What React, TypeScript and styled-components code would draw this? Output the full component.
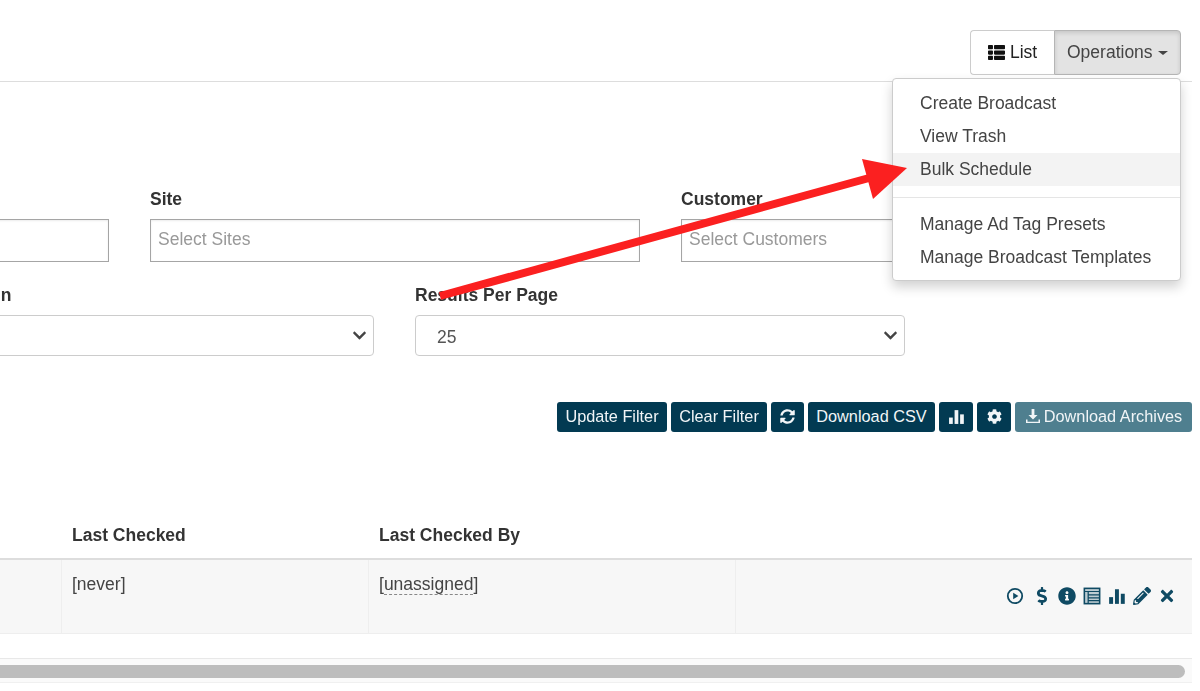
import React from 'react';
import styled, { createGlobalStyle } from 'styled-components';
import { FaThList, FaSyncAlt, FaCog, FaDollarSign, FaInfoCircle, FaPencilAlt, FaTimes, FaChevronDown } from 'react-icons/fa';

const GlobalStyle = createGlobalStyle`
  html, body {
    margin: 0;
    padding: 0;
    background: #fff;
    overflow: hidden;
  }
  body {
    font-family: "Liberation Sans", Arial, sans-serif;
    font-size: 17.5px;
    color: #333;
  }
`;

const Page = styled.div`
  position: relative;
  width: 1200px;
  height: 691px;
  overflow: hidden;
  filter: blur(0.6px);
`;

const Header = styled.header`
  display: flex;
  justify-content: flex-end;
  align-items: flex-start;
  width: 1192px;
  height: 82px;
  box-sizing: border-box;
  padding: 30px 11px 0 0;
  border-bottom: 1px solid #ddd;
`;

const ButtonGroup = styled.div`
  display: flex;
  height: 45px;
`;

const ListButton = styled.button`
  display: flex;
  align-items: center;
  gap: 5px;
  width: 84px;
  box-sizing: border-box;
  padding: 0 0 0 17px;
  font: 17.5px "Liberation Sans", Arial, sans-serif;
  color: #222;
  background: #fff;
  border: 1px solid #ccc;
  border-right: 0;
  border-radius: 4px 0 0 4px;
`;

const OpsButton = styled.button`
  display: flex;
  align-items: center;
  gap: 5px;
  width: 127px;
  box-sizing: border-box;
  padding: 0 0 0 12px;
  font: 17.5px "Liberation Sans", Arial, sans-serif;
  color: #444;
  background: #e3e3e3;
  border: 1px solid #b5b5b5;
  border-radius: 0 4px 4px 0;
  box-shadow: inset 0 2px 4px rgba(0, 0, 0, 0.13);
`;

const Caret = styled.span`
  width: 0;
  height: 0;
  border-top: 4px solid #444;
  border-left: 5px solid transparent;
  border-right: 5px solid transparent;
`;

const Menu = styled.ul`
  position: absolute;
  z-index: 2;
  left: 892px;
  top: 78px;
  width: 289px;
  height: 203px;
  box-sizing: border-box;
  margin: 0;
  padding: 8px 0 0;
  list-style: none;
  background: #fff;
  border: 1px solid #ccc;
  border-radius: 4px;
  box-shadow: 0 6px 12px rgba(0, 0, 0, 0.18);
`;

const MenuItem = styled.li<{ $active?: boolean }>`
  height: 33px;
  line-height: 33px;
  padding-left: 27px;
  color: #444;
  background: ${(p) => (p.$active ? '#f3f3f3' : 'transparent')};
`;

const MenuDivider = styled.li`
  height: 1px;
  margin: 11px 0 10px;
  background: #e5e5e5;
`;

const Filters = styled.section`
  width: 1192px;
  padding-top: 107px;
`;

const FilterRow = styled.div<{ $shift: number }>`
  display: flex;
  gap: 41px;
  margin-bottom: 23px;
  margin-left: ${(p) => p.$shift}px;
`;

const Field = styled.div`
  flex: none;
  width: 490px;
`;

const Label = styled.label`
  display: block;
  height: 20px;
  line-height: 20px;
  margin-bottom: 10px;
  font-weight: 700;
  color: #333;
`;

const TextBox = styled.div`
  height: 43px;
  box-sizing: border-box;
  padding-left: 7px;
  line-height: 39px;
  color: #999;
  border: 1px solid #a5a5a5;
  box-shadow: inset 0 1px 2px rgba(0, 0, 0, 0.08);
`;

const SelectBox = styled.div`
  display: flex;
  align-items: center;
  height: 41px;
  box-sizing: border-box;
  padding: 3px 6px 0 21px;
  color: #555;
  background: #fff;
  border: 1px solid #ccc;
  border-radius: 4px;
  svg {
    margin: -4px 0 0 auto;
    color: #444;
    font-size: 15px;
  }
`;

const Actions = styled.div`
  display: flex;
  justify-content: flex-end;
  gap: 4px;
  margin-top: 46px;
  height: 30px;
`;

const ActionButton = styled.button<{ $muted?: boolean; $width: number }>`
  display: flex;
  align-items: center;
  justify-content: center;
  gap: 3px;
  width: ${(p) => p.$width}px;
  box-sizing: border-box;
  padding: 0 0 2px;
  font: 16.3px "Liberation Sans", Arial, sans-serif;
  white-space: nowrap;
  color: #f1f5f7;
  background: ${(p) => (p.$muted ? '#4f7f8f' : '#023a52')};
  border: 0;
  border-radius: 3px;
`;

const Table = styled.div`
  width: 1192px;
  margin-top: 91px;
`;

const HeadRow = styled.div`
  display: grid;
  grid-template-columns: 62px 307px 367px 1fr;
  height: 35px;
  border-bottom: 2px solid #ddd;
`;

const HeadCell = styled.div`
  padding: 2px 0 0 10px;
  line-height: 20px;
  font-weight: 700;
  color: #333;
`;

const BodyRow = styled.div`
  display: grid;
  grid-template-columns: 62px 307px 367px 1fr;
  height: 73px;
  background: #f7f7f7;
  border-bottom: 1px solid #eee;
`;

const BodyCell = styled.div`
  padding: 14px 0 0 10px;
  line-height: 20px;
  color: #444;
  border-right: 1px solid #eee;
`;

const Unassigned = styled.span`
  border-bottom: 1px dashed #888;
`;

const RowIcons = styled.div`
  display: flex;
  justify-content: flex-end;
  align-items: center;
  gap: 7px;
  padding: 0 16px 2px 0;
  color: #0f4a63;
  font-size: 18px;
  svg:first-child {
    margin-right: 2px;
  }
`;

const ScrollTrack = styled.div`
  width: 1192px;
  height: 25px;
  box-sizing: border-box;
  margin-top: 24px;
  padding: 6px 7px 5px 0;
  background: #fafafa;
  border-top: 1px solid #e8e8e8;
  border-bottom: 1px solid #f0f0f0;
`;

const ScrollThumb = styled.div`
  height: 13px;
  background: #bdbdbd;
  border-radius: 0 7px 7px 0;
`;

const Annotation = styled.svg`
  position: absolute;
  z-index: 3;
  left: 0;
  top: 0;
  pointer-events: none;
`;

function Bars({ size }: { size: number }): JSX.Element {
  return (
    <svg width={size} height={size} viewBox="0 0 16 16" fill="currentColor">
      <rect x="1" y="9" width="3.5" height="6" />
      <rect x="6.2" y="2" width="3.5" height="13" />
      <rect x="11.4" y="6" width="3.5" height="9" />
    </svg>
  );
}

function PlayRing(): JSX.Element {
  return (
    <svg width="18" height="18" viewBox="0 0 16 16" fill="currentColor">
      <circle cx="8" cy="8" r="6.4" fill="none" stroke="currentColor" strokeWidth="1.6" />
      <path d="M6.4 5.2 11 8l-4.6 2.8z" />
    </svg>
  );
}

function Ledger(): JSX.Element {
  return (
    <svg width="18" height="18" viewBox="0 0 16 16" fill="none" stroke="currentColor" strokeWidth="1.1">
      <rect x="1.2" y="1.2" width="13.6" height="13.6" fill="currentColor" fillOpacity="0.25" strokeWidth="1.4" />
      <path d="M1.2 4h13.6M4.6 4v10.8M4.6 7h10.2M4.6 9.6h10.2M4.6 12.2h10.2" />
    </svg>
  );
}

function DownloadTray(): JSX.Element {
  return (
    <svg width="16" height="16" viewBox="0 0 16 16" fill="currentColor">
      <path d="M6.6 1h2.8v6h3.1L8 11.5 3.5 7h3.1z" />
      <path d="M1 11.5h1.5v2.2h11v-2.2H15V15H1z" />
    </svg>
  );
}

function App(): JSX.Element {
  return (
    <Page>
      <GlobalStyle />
      <Header>
        <ButtonGroup>
          <ListButton>
            <FaThList size={17} color="#111" />
            List
          </ListButton>
          <OpsButton>
            Operations
            <Caret />
          </OpsButton>
        </ButtonGroup>
      </Header>

      <Menu>
        <MenuItem>Create Broadcast</MenuItem>
        <MenuItem>View Trash</MenuItem>
        <MenuItem $active>Bulk Schedule</MenuItem>
        <MenuDivider />
        <MenuItem>Manage Ad Tag Presets</MenuItem>
        <MenuItem>Manage Broadcast Templates</MenuItem>
      </Menu>

      <Filters>
        <FilterRow $shift={-381}>
          <Field>
            <Label>&nbsp;</Label>
            <TextBox />
          </Field>
          <Field>
            <Label>Site</Label>
            <TextBox>Select Sites</TextBox>
          </Field>
          <Field>
            <Label>Customer</Label>
            <TextBox>Select Customers</TextBox>
          </Field>
        </FilterRow>
        <FilterRow $shift={-116}>
          <Field>
            <Label>Media Location</Label>
            <SelectBox>
              <FaChevronDown />
            </SelectBox>
          </Field>
          <Field>
            <Label>Results Per Page</Label>
            <SelectBox>
              25
              <FaChevronDown />
            </SelectBox>
          </Field>
        </FilterRow>
        <Actions>
          <ActionButton $width={110}>Update Filter</ActionButton>
          <ActionButton $width={96}>Clear Filter</ActionButton>
          <ActionButton $width={33}>
            <FaSyncAlt size={15} />
          </ActionButton>
          <ActionButton $width={127}>Download CSV</ActionButton>
          <ActionButton $width={34}>
            <Bars size={17} />
          </ActionButton>
          <ActionButton $width={34}>
            <FaCog size={15} />
          </ActionButton>
          <ActionButton $width={177} $muted>
            <DownloadTray />
            Download Archives
          </ActionButton>
        </Actions>
      </Filters>

      <Table>
        <HeadRow>
          <div />
          <HeadCell>Last Checked</HeadCell>
          <HeadCell>Last Checked By</HeadCell>
          <div />
        </HeadRow>
        <BodyRow>
          <BodyCell />
          <BodyCell>[never]</BodyCell>
          <BodyCell>
            [<Unassigned>unassigned</Unassigned>]
          </BodyCell>
          <RowIcons>
            <PlayRing />
            <FaDollarSign />
            <FaInfoCircle />
            <Ledger />
            <Bars size={18} />
            <FaPencilAlt />
            <FaTimes />
          </RowIcons>
        </BodyRow>
      </Table>

      <ScrollTrack>
        <ScrollThumb />
      </ScrollTrack>

      <Annotation width={1200} height={691} viewBox="0 0 1200 691">
        <line x1={440} y1={296} x2={880} y2={175} stroke="#fb2020" strokeWidth={8} />
        <polygon points="907,168 862,159 873,199" fill="#fb2020" />
      </Annotation>
    </Page>
  );
}

export default App;
